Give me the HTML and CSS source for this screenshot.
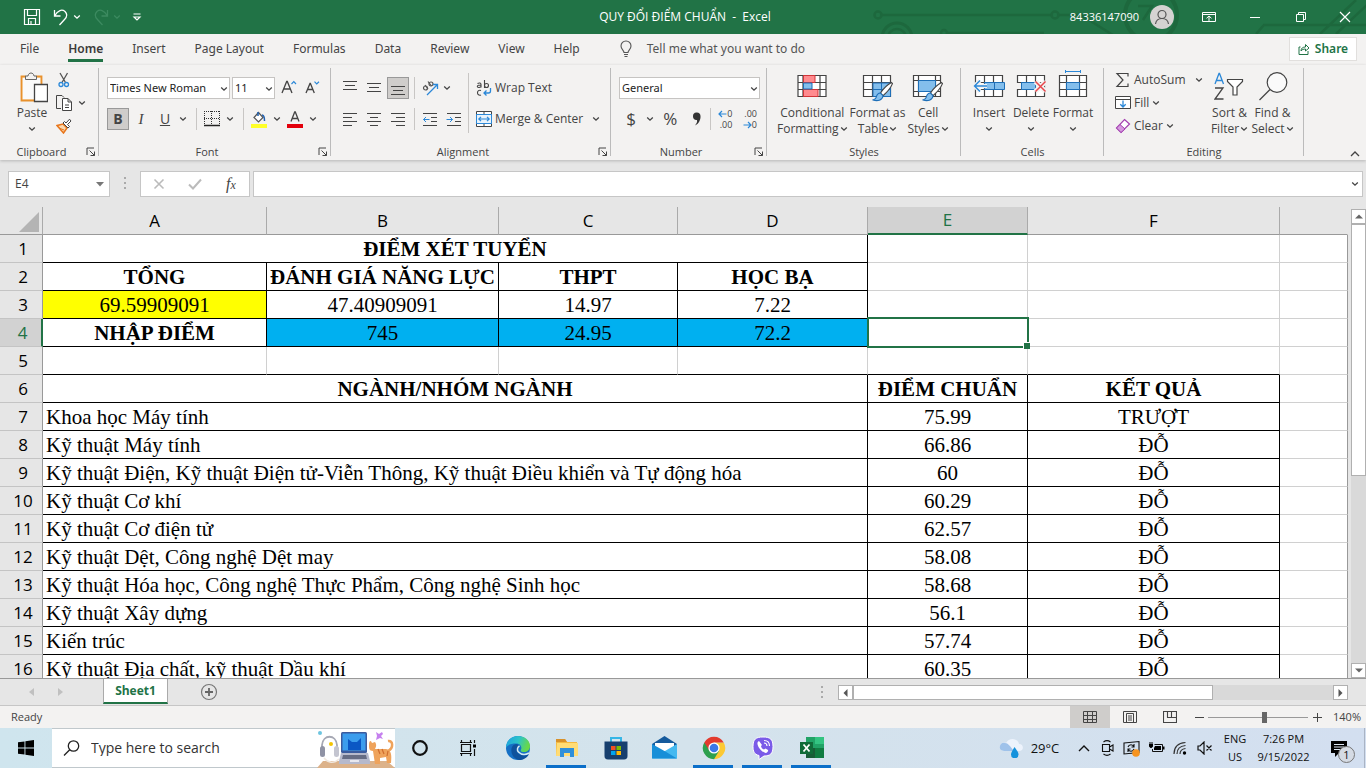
FILE: index.html
```html
<!DOCTYPE html>
<html lang="vi">
<head>
<meta charset="utf-8">
<meta name="viewport" content="width=device-width, initial-scale=1">
<title>QUY ĐỔI ĐIỂM CHUẨN - Excel</title>
<link rel="stylesheet" href="styles.css">
</head>
<body>
<svg class="defs" aria-hidden="true">
  <symbol id="chev" viewBox="0 0 8 8"><path d="M1.2 2.5 4 5.2l2.8-2.7" fill="none" stroke="currentColor" stroke-width="1.3"/></symbol>
  <symbol id="launch" viewBox="0 0 10 10"><path d="M1 8V1h7M3.500 3.500l5 5M8.500 4.500v4h-4" fill="none" stroke="#444" stroke-width="1"/></symbol>
  <symbol id="brush" viewBox="0 0 20 20"><path d="M18.500 1.500C14 4 10 8.500 8 11.500l2.500 2.500C14 11 18 6 19.500 2.500z" fill="#fff" stroke="#444" stroke-width="1.100"/><path d="M8 11.500c-3 0-3.500 2-4 4-.4 1.500-1.500 2-3 2.500 4 1.500 9 .5 9.500-4z" fill="#83beec" stroke="#1e6fb8" stroke-width="1"/></symbol>
</svg>

<header class="titlebar">
  <svg class="circuit" viewBox="0 0 526 34" width="526" height="34" aria-hidden="true">
    <g fill="none" stroke="#1d683d" stroke-width="2.500">
      <circle cx="38" cy="15" r="3.500"/><path d="M42 15h169M219 15h22l35 22"/><circle cx="215" cy="15" r="3.500"/>
      <circle cx="57" cy="38" r="15" stroke-width="3"/><circle cx="57" cy="38" r="9"/><circle cx="104" cy="33" r="3"/><path d="M108 33h96"/>
      <circle cx="311" cy="15" r="26" stroke-width="4"/><path d="M298 6h14l-9 14M416 34l8-9h102M480 34l36-34M496 34l32-30"/>
    </g>
  </svg>
  <div class="quick">
    <button aria-label="Save"><svg width="18" height="18" viewBox="0 0 18 18"><path d="M1.500 1.500h15v15h-15zM4.500 1.500v6h9v-6M5.500 16v-5.500h7V16M8 16v-3" fill="none" stroke="#fff" stroke-width="1.200"/></svg></button>
    <button aria-label="Undo"><svg width="18" height="18" viewBox="0 0 18 18"><path d="M2.500 2v6h6M2.500 8C6 2 10 1 13 3.500c3 3 1.500 6-.5 8L7.500 17" fill="none" stroke="#fff" stroke-width="1.300"/></svg><svg class="c8"><use href="#chev"/></svg></button>
    <button class="dim" aria-label="Redo"><svg width="18" height="18" viewBox="0 0 18 18"><path d="M15.500 2v6h-6M15.500 8C12 2 8 1 5 3.500c-3 3-1.500 6 .5 8l5 5.500" fill="none" stroke="currentColor" stroke-width="1.300"/></svg><svg class="c8"><use href="#chev"/></svg></button>
    <button aria-label="Customize toolbar"><svg width="10" height="10" viewBox="0 0 10 10"><path d="M1.500 2h7M2 5l3 3 3-3z" fill="none" stroke="#fff" stroke-width="1.200"/></svg></button>
  </div>
  <h1 class="doc-title">QUY ĐỔI ĐIỂM CHUẨN&nbsp; -&nbsp; Excel</h1>
  <div class="account">
    <span>84336147090</span>
    <svg width="24" height="24" viewBox="0 0 24 24"><circle cx="12" cy="12" r="12" fill="#d5d3d2"/><circle cx="12" cy="9.500" r="4" fill="none" stroke="#555" stroke-width="1.200"/><path d="M5.500 19c.5-4 3-5.500 6.500-5.500s6 1.500 6.500 5.500" fill="none" stroke="#555" stroke-width="1.200"/></svg>
  </div>
  <div class="window-buttons">
    <button aria-label="Ribbon display options"><svg width="14" height="12" viewBox="0 0 14 12"><path d="M.5 1.500h13v9H.5zM.5 3.500h13M7 10V5M4.500 7.300 7 5l2.500 2.300" fill="none" stroke="#fff"/></svg></button>
    <button aria-label="Minimize"><svg width="12" height="12" viewBox="0 0 12 12"><path d="M1 6.500h10" stroke="#fff"/></svg></button>
    <button aria-label="Restore"><svg width="12" height="12" viewBox="0 0 12 12"><path d="M1.500 3.500h7v7h-7zM3.500 3.500v-2h7v7h-2" fill="none" stroke="#fff"/></svg></button>
    <button aria-label="Close"><svg width="12" height="12" viewBox="0 0 12 12"><path d="m1 1 10 10M11 1 1 11" stroke="#fff" stroke-width="1.200"/></svg></button>
  </div>
</header>

<nav class="tabs">
  <a href="#file">File</a><a href="#home" class="active">Home</a><a href="#insert">Insert</a><a href="#layout">Page Layout</a><a href="#formulas">Formulas</a><a href="#data">Data</a><a href="#review">Review</a><a href="#view">View</a><a href="#help">Help</a>
  <button class="tell"><svg width="14" height="18" viewBox="0 0 14 18"><path d="M5 12.500c0-2-3-3-3-6.500a5 5 0 0 1 10 0c0 3.500-3 4.500-3 6.500zM5 14.500h4M5.500 16.500h3" fill="none" stroke="#555" stroke-width="1.100"/></svg>Tell me what you want to do</button>
  <button class="share"><svg width="12" height="12" viewBox="0 0 12 12"><path d="M2.500 4H1v7.500h9V8M3 8c0-3 2-4 4.500-4V1.500L11 5 7.500 8V6C5.500 6 4 6.500 3 8z" fill="none" stroke="#217346"/></svg>Share</button>
</nav>

<section class="ribbon" aria-label="Home ribbon">
  <div class="group g-clipboard">
    <div class="body">
      <button class="big paste"><svg width="28" height="32" viewBox="0 0 28 32"><path d="M6 4.500H1.500v24H14M16 4.500h5.500V12" fill="#fcebd0" stroke="#e8912d" stroke-width="1.800"/><path d="M3 6h17v7h-6v14H3z" fill="#fafafa"/><path d="M5.500 7.500V4H8c.5-4 5.500-4 6 0h2.500v3.500z" fill="#f3f2f1" stroke="#666"/><path d="M14.500 12.500h13v17h-13z" fill="#fff" stroke="#444" stroke-width="1.300"/></svg><span>Paste</span><svg class="c8"><use href="#chev"/></svg></button>
      <div class="stack">
        <button aria-label="Cut"><svg width="16" height="16" viewBox="0 0 16 16"><path d="m4 1 5.500 9.500M11.500 1 6 10.500" stroke="#555" stroke-width="1.300"/><circle cx="5" cy="12.500" r="2" fill="none" stroke="#2b88d8" stroke-width="1.300"/><circle cx="10.500" cy="12.500" r="2" fill="none" stroke="#2b88d8" stroke-width="1.300"/></svg></button>
        <button aria-label="Copy"><svg width="16" height="16" viewBox="0 0 16 16"><path d="M5 13.500H.5V.5H6L8 2.500" fill="none" stroke="#444"/><path d="M6.500 3.500H12l3.500 3.500v8.500h-9zM12 3.500V7h3.500M9 10h4M9 12.500h4" fill="#fff" stroke="#444"/></svg><svg class="c8"><use href="#chev"/></svg></button>
        <button aria-label="Format painter"><svg width="16" height="16" viewBox="0 0 16 16"><path d="M1 7.500 7 6l4 4-3.500 5z" fill="#fbd9b0" stroke="#e8751a" stroke-width="1.500"/><path d="m3 10 5 2" stroke="#e8751a"/><path d="m7 5 5 5 1.500-1.500-2-2L15 3 13.500 1.200 10 5 8.500 3.500z" fill="#fff" stroke="#444"/></svg></button>
      </div>
    </div>
    <div class="label">Clipboard<button aria-label="Clipboard settings"><svg><use href="#launch"/></svg></button></div>
  </div>

  <div class="group g-font">
    <div class="body rows">
      <div class="row">
        <div class="combo font-name"><select aria-label="Font"><option>Times New Roman</option></select><svg class="c8"><use href="#chev"/></svg></div>
        <div class="combo font-size"><select aria-label="Font size"><option>11</option></select><svg class="c8"><use href="#chev"/></svg></div>
        <button class="tool" aria-label="Increase font size"><svg width="16" height="16" viewBox="0 0 16 16"><path d="M1 13 5.700 1.500h.6L11 13M2.700 9h6.600" fill="none" stroke="#444" stroke-width="1.300"/><path d="m10.500 4 2.300-2.300L15 4" fill="none" stroke="#2b88d8" stroke-width="1.200"/></svg></button>
        <button class="tool" aria-label="Decrease font size"><svg width="16" height="16" viewBox="0 0 16 16"><path d="M1 13 5 3.500h.4L9.300 13M2.500 9.500H8" fill="none" stroke="#444" stroke-width="1.300"/><path d="m9.500 1.700 2.200 2.200L14 1.700" fill="none" stroke="#2b88d8" stroke-width="1.200"/></svg></button>
      </div>
      <div class="row">
        <button class="tool on" aria-label="Bold"><b>B</b></button>
        <button class="tool" aria-label="Italic"><i>I</i></button>
        <button class="tool" aria-label="Underline"><u>U</u></button>
        <button class="drop" aria-label="Underline options"><svg class="c8"><use href="#chev"/></svg></button>
        <span class="sep"></span>
        <button class="tool" aria-label="Borders"><svg width="16" height="16" viewBox="0 0 16 16"><path d="M.5 0v14M15.500 0v14M7.500 0v14M0 .5h16M0 7.500h16" stroke="#333" stroke-dasharray="1 1"/><path d="M0 14.500h16" stroke="#222" stroke-width="1.500"/></svg></button>
        <button class="drop" aria-label="Border options"><svg class="c8"><use href="#chev"/></svg></button>
        <span class="sep"></span>
        <button class="tool" aria-label="Fill color"><svg width="16" height="17" viewBox="0 0 16 17"><path d="M3 6.500 7.500 1.500l4.500 5-4.500 4.500z" fill="#fff" stroke="#555" stroke-width="1.200"/><path d="M7 1v4M11 4c2 0 2.500 3 2.500 6" fill="none" stroke="#1e5fb0" stroke-width="1.500"/><path d="M0 13h16v4H0z" fill="#ffff28"/></svg></button>
        <button class="drop" aria-label="Fill options"><svg class="c8"><use href="#chev"/></svg></button>
        <button class="tool" aria-label="Font color"><svg width="16" height="17" viewBox="0 0 16 17"><path d="M4 10.500 7.700 1h.6l3.700 9.500M5.300 7.500h5.400" fill="none" stroke="#444" stroke-width="1.300"/><path d="M0 13h16v4H0z" fill="#e3000b"/></svg></button>
        <button class="drop" aria-label="Font color options"><svg class="c8"><use href="#chev"/></svg></button>
      </div>
    </div>
    <div class="label">Font<button aria-label="Font settings"><svg><use href="#launch"/></svg></button></div>
  </div>

  <div class="group g-align">
    <div class="body">
      <div class="rows">
        <div class="row wide">
          <button class="tool" aria-label="Top align"><svg class="lines"><path d="M1 1.500h14M3 5.500h10M1 9.500h14"/></svg></button>
          <button class="tool" aria-label="Middle align"><svg class="lines"><path d="M1 3.500h14M3 7.500h10M1 11.500h14"/></svg></button>
          <button class="tool on" aria-label="Bottom align"><svg class="lines"><path d="M1 6.500h14M3 10.500h10M1 14.500h14"/></svg></button>
          <span class="sep"></span>
          <button class="tool" aria-label="Orientation"><svg width="17" height="16" viewBox="0 0 17 16"><g fill="none" stroke="#555" stroke-width="1.200"><circle cx="3.500" cy="8" r="2"/><path d="m3 5 3 4M6 1.500 9.500 6"/><circle cx="9" cy="4" r="2"/></g><path d="M5 15 15.500 4.500M11 4.500h4.500V9" fill="none" stroke="#2b88d8" stroke-width="1.300"/></svg></button>
          <button class="drop" aria-label="Orientation options"><svg class="c8"><use href="#chev"/></svg></button>
        </div>
        <div class="row wide">
          <button class="tool" aria-label="Align left"><svg class="lines"><path d="M1 2.500h14M1 6.500h9M1 10.500h14M1 14.500h9"/></svg></button>
          <button class="tool" aria-label="Center"><svg class="lines"><path d="M1 2.500h14M4 6.500h8M1 10.500h14M4 14.500h8"/></svg></button>
          <button class="tool" aria-label="Align right"><svg class="lines"><path d="M1 2.500h14M6 6.500h9M1 10.500h14M6 14.500h9"/></svg></button>
          <span class="sep"></span>
          <button class="tool" aria-label="Decrease indent"><svg class="lines"><path d="M1 2.500h14M9 6.500h6M9 10.500h6M1 14.500h14"/><path class="blue" d="M7.500 8.500h-6M4 6 1.500 8.500 4 11"/></svg></button>
          <button class="tool" aria-label="Increase indent"><svg class="lines"><path d="M1 2.500h14M9 6.500h6M9 10.500h6M1 14.500h14"/><path class="blue" d="M.5 8.500h6M4 6l2.500 2.500L4 11"/></svg></button>
        </div>
      </div>
      <div class="rows wraps">
        <button class="text-tool"><svg width="16" height="16" viewBox="0 0 16 16"><g fill="none" stroke="#444" stroke-width="1.100"><path d="M1.500 3.500c2-1 3.500-.5 3.500 1v3M5 5C3 5 1.300 5.300 1.300 6.500S4 8 5 6.500M8.500 0v8"/><circle cx="10.500" cy="5.500" r="2"/><path d="M5 10.500c-2-.7-3.500.3-3.500 2.200s1.500 3 3.500 2.300"/></g><path d="M14.500 8v3c0 1.500-1 2-2 2H8M10.500 10.500 8 13l2.500 2.500" fill="none" stroke="#2b88d8" stroke-width="1.300"/></svg>Wrap Text</button>
        <button class="text-tool"><svg width="16" height="16" viewBox="0 0 16 16"><path d="M.5.5h15v15H.5zM.5 3.500h15M.5 12.500h15M8 .5v3M8 12.500v3" fill="#fff" stroke="#444"/><path d="M.5 3.500h15v9H.5z" fill="#e8f3fc" stroke="#2b88d8"/><path d="M3 8h10M5 5.800 2.800 8 5 10.200M11 5.800 13.200 8 11 10.200" fill="none" stroke="#2b88d8" stroke-width="1.200"/></svg>Merge &amp; Center<svg class="c8 apart"><use href="#chev"/></svg></button>
      </div>
    </div>
    <div class="label">Alignment<button aria-label="Alignment settings"><svg><use href="#launch"/></svg></button></div>
  </div>

  <div class="group g-number">
    <div class="body rows">
      <div class="combo"><select aria-label="Number format"><option>General</option></select><svg class="c8"><use href="#chev"/></svg></div>
      <div class="row">
        <button class="tool sym" aria-label="Accounting format">$</button>
        <button class="drop" aria-label="Accounting options"><svg class="c8"><use href="#chev"/></svg></button>
        <button class="tool sym pc" aria-label="Percent style">%</button>
        <button class="tool" aria-label="Comma style"><svg width="10" height="14" viewBox="0 0 10 14"><path d="M1 4.500a3.500 3.500 0 0 1 7.500-.5c.3 4-2 8-5.500 9.500 1.500-2 2.500-3.500 2-5.500C3 8.500 1 7 1 4.500z" fill="#333"/></svg></button>
        <span class="sep"></span>
        <button class="tool dec" aria-label="Increase decimal"><span><svg width="9" height="8" viewBox="0 0 9 8"><path d="M8.500 4H1M4 1 1 4l3 3" fill="none" stroke="#2b88d8" stroke-width="1.200"/></svg>0</span><span>.00</span></button>
        <button class="tool dec" aria-label="Decrease decimal"><span>.00</span><span><svg width="9" height="8" viewBox="0 0 9 8"><path d="M.5 4H8M5 1l3 3-3 3" fill="none" stroke="#2b88d8" stroke-width="1.200"/></svg>0</span></button>
      </div>
    </div>
    <div class="label">Number<button aria-label="Number settings"><svg><use href="#launch"/></svg></button></div>
  </div>

  <div class="group g-styles">
    <div class="body">
      <button class="big"><svg width="30" height="32" viewBox="0 0 30 32"><path d="M1 3.500h28v21H1zM1 10.500h28M1 17.500h28M6 3.500v21M23 3.500v21" fill="#fff" stroke="#444" stroke-width="1.200"/><path d="M6.500 3.500H18v7H6.500zM6.500 17.500H21v7H6.500z" fill="#ff8b8f" stroke="#d13438"/><path d="M6.500 11H15v6H6.500z" fill="#83beec" stroke="#1e6fb8"/></svg><span>Conditional</span><span>Formatting <svg class="c8"><use href="#chev"/></svg></span></button>
      <button class="big"><svg width="32" height="32" viewBox="0 0 32 32"><path d="M1.500 3.500h27v21h-27zM1.500 10.500h27M1.500 17.500h27M10.500 3.500v21M19.500 3.500v21" fill="#fff" stroke="#444" stroke-width="1.200"/><path d="M11 11h17.500v13H11z" fill="#83beec"/><path d="M11 17.500h17M19.500 11v13M11 11h17.500v13.500H11z" fill="none" stroke="#1e6fb8"/><use href="#brush" x="10" y="9" width="21" height="21"/></svg><span>Format as</span><span>Table <svg class="c8"><use href="#chev"/></svg></span></button>
      <button class="big"><svg width="32" height="32" viewBox="0 0 32 32"><path d="M1.500 3.500h27v21h-27zM1.500 8.500h27M1.500 19.500h27M6.500 3.500v21M23.500 3.500v21" fill="#fff" stroke="#444" stroke-width="1.200"/><path d="M6.500 8.500h17v11h-17z" fill="#83beec" stroke="#1e6fb8"/><use href="#brush" x="10" y="9" width="21" height="21"/></svg><span>Cell</span><span>Styles <svg class="c8"><use href="#chev"/></svg></span></button>
    </div>
    <div class="label">Styles</div>
  </div>

  <div class="group g-cells">
    <div class="body">
      <button class="big"><svg width="32" height="32" viewBox="0 0 32 32"><path d="M2.500 3.500h27v21h-27zM2.500 10.500h27M2.500 17.500h27M11.500 3.500v21M20.500 3.500v21" fill="#fff" stroke="#444" stroke-width="1.200"/><path d="M11.500 10.500h20v7h-20z" fill="#83beec" stroke="#1e6fb8"/><path d="M21.500 10.500v7" stroke="#1e6fb8"/><path d="M14 14H2M7 8.500 1.500 14 7 19.500" fill="none" stroke="#f3f2f1" stroke-width="4"/><path d="M14 14H1.500M7 8.500 1.500 14 7 19.500" fill="none" stroke="#2b88d8" stroke-width="1.400"/></svg><span>Insert</span><svg class="c8"><use href="#chev"/></svg></button>
      <button class="big"><svg width="32" height="32" viewBox="0 0 32 32"><path d="M2.500 3.500h27v21h-27zM2.500 10.500h27M2.500 17.500h27M11.500 3.500v21M20.500 3.500v21" fill="#fff" stroke="#444" stroke-width="1.200"/><path d="M0 11h6.500v6H0z" fill="#f3f2f1"/><path d="M6.500 10.500h14v7h-14z" fill="#83beec" stroke="#1e6fb8"/><path d="m20.500 9.500 10 10m0-10-10 10" stroke="#f3f2f1" stroke-width="5"/><path d="m20.500 9.500 10 10m0-10-10 10" stroke="#e8474c" stroke-width="1.500"/></svg><span>Delete</span><svg class="c8"><use href="#chev"/></svg></button>
      <button class="big"><svg class="over" width="32" height="32" viewBox="0 0 32 32"><path d="M2.500 3.500h27v21h-27zM2.500 10.500h27M2.500 17.500h27M9.500 3.500v21M22.500 3.500v21" fill="#fff" stroke="#444" stroke-width="1.200"/><path d="M9.500 10.500h13v7h-13z" fill="#83beec" stroke="#1e6fb8"/><path d="M8.500-.5h15M8.500-2v3M23.500-2v3" stroke="#2b88d8"/></svg><span>Format</span><svg class="c8"><use href="#chev"/></svg></button>
    </div>
    <div class="label">Cells</div>
  </div>

  <div class="group g-edit">
    <div class="body">
      <div class="edit-list">
        <button class="text-tool"><svg width="16" height="16" viewBox="0 0 16 16"><path d="M13 4.500v-3H2L8 8l-6 6.500h11v-3" fill="none" stroke="#444" stroke-width="1.200"/></svg>AutoSum<svg class="c8 apart"><use href="#chev"/></svg></button>
        <button class="text-tool"><svg width="16" height="16" viewBox="0 0 16 16"><path d="M.5 1.500h15v12H.5zM.5 4.500h15" fill="#fff" stroke="#444"/><path d="M8 5.500v6.500M5.300 9.300 8 12l2.700-2.700" fill="none" stroke="#2b88d8" stroke-width="1.300"/></svg>Fill <svg class="c8"><use href="#chev"/></svg></button>
        <button class="text-tool"><svg width="16" height="16" viewBox="0 0 16 16"><path d="M9.500 1.500 14.500 6 6 14.500 1.500 10z" fill="#fff" stroke="#a33fb0" stroke-width="1.200"/><path d="m5 6.500 5 4.500-4 3.500L1.500 10z" fill="#d59ade" stroke="#a33fb0"/></svg>Clear <svg class="c8"><use href="#chev"/></svg></button>
      </div>
      <button class="big"><svg width="32" height="32" viewBox="0 0 32 32"><path d="M1 12 5 1.500h.5L9.500 12M2.500 8.500H8" fill="none" stroke="#2b88d8" stroke-width="1.300"/><path d="M1 16h8L1 27h8.500" fill="none" stroke="#444" stroke-width="1.300"/><path d="M13.500 7.500h15v2L23 15v8h-4v-8l-5.500-5.500z" fill="#fff" stroke="#444" stroke-width="1.200"/></svg><span>Sort &amp;</span><span>Filter <svg class="c8"><use href="#chev"/></svg></span></button>
      <button class="big"><svg width="32" height="32" viewBox="0 0 32 32"><circle cx="20" cy="10.500" r="9.800" fill="#fafafa" stroke="#444" stroke-width="1.200"/><path d="M13 17.500 2.500 28" stroke="#444" stroke-width="1.300"/></svg><span>Find &amp;</span><span>Select <svg class="c8"><use href="#chev"/></svg></span></button>
    </div>
    <div class="label">Editing</div>
  </div>
  <button class="collapse" aria-label="Collapse ribbon"><svg width="10" height="6" viewBox="0 0 10 6"><path d="m1 5 4-4 4 4" fill="none" stroke="#444" stroke-width="1.300"/></svg></button>
</section>

<section class="formula" aria-label="Formula bar">
  <div class="name-box"><input aria-label="Name box" value="E4"><svg width="8" height="5" viewBox="0 0 8 5"><path d="M0 0h8L4 4.500z" fill="#777"/></svg></div>
  <span class="dots"></span>
  <div class="fx">
    <button aria-label="Cancel"><svg width="12" height="12" viewBox="0 0 12 12"><path d="m1.500 1.500 9 9m0-9-9 9" stroke="#bbb" stroke-width="1.600"/></svg></button>
    <button aria-label="Enter"><svg width="14" height="12" viewBox="0 0 14 12"><path d="m1 6.500 4 4L13 1.500" fill="none" stroke="#bbb" stroke-width="2"/></svg></button>
    <button aria-label="Insert function"><i>f<small>x</small></i></button>
  </div>
  <div class="entry"><input aria-label="Formula"><svg class="c8"><use href="#chev"/></svg></div>
</section>

<main class="sheet">
  <div class="grid-view">
    <table class="grid">
      <colgroup><col class="w-row"><col class="w-a"><col class="w-b"><col class="w-c"><col class="w-d"><col class="w-e"><col class="w-f"><col></colgroup>
      <thead><tr><th class="corner"><svg width="20" height="20" viewBox="0 0 20 20"><path d="M20 0v20H0z" fill="#b4b4b4"/></svg></th><th>A</th><th>B</th><th>C</th><th>D</th><th class="sel">E</th><th>F</th><th></th></tr></thead>
      <tbody>
        <tr><th>1</th><td colspan="4" class="k h">ĐIỂM XÉT TUYỂN</td><td></td><td></td><td></td></tr>
        <tr><th>2</th><td class="k h">TỔNG</td><td class="k h">ĐÁNH GIÁ NĂNG LỰC</td><td class="k h">THPT</td><td class="k h">HỌC BẠ</td><td></td><td></td><td></td></tr>
        <tr><th>3</th><td class="k yellow">69.59909091</td><td class="k">47.40909091</td><td class="k">14.97</td><td class="k">7.22</td><td></td><td></td><td></td></tr>
        <tr><th class="sel">4</th><td class="k h">NHẬP ĐIỂM</td><td class="k blue">745</td><td class="k blue">24.95</td><td class="k blue">72.2</td><td class="cursor"></td><td></td><td></td></tr>
        <tr class="above"><th>5</th><td></td><td></td><td></td><td></td><td></td><td></td><td></td></tr>
        <tr><th>6</th><td colspan="4" class="k h">NGÀNH/NHÓM NGÀNH</td><td class="k h">ĐIỂM CHUẨN</td><td class="k h">KẾT QUẢ</td><td></td></tr>
        <tr><th>7</th><td colspan="4" class="k l">Khoa học Máy tính</td><td class="k">75.99</td><td class="k">TRƯỢT</td><td></td></tr>
        <tr><th>8</th><td colspan="4" class="k l">Kỹ thuật Máy tính</td><td class="k">66.86</td><td class="k">ĐỖ</td><td></td></tr>
        <tr><th>9</th><td colspan="4" class="k l">Kỹ thuật Điện, Kỹ thuật Điện tử-Viễn Thông, Kỹ thuật Điều khiển và Tự động hóa</td><td class="k">60</td><td class="k">ĐỖ</td><td></td></tr>
        <tr><th>10</th><td colspan="4" class="k l">Kỹ thuật Cơ khí</td><td class="k">60.29</td><td class="k">ĐỖ</td><td></td></tr>
        <tr><th>11</th><td colspan="4" class="k l">Kỹ thuật Cơ điện tử</td><td class="k">62.57</td><td class="k">ĐỖ</td><td></td></tr>
        <tr><th>12</th><td colspan="4" class="k l">Kỹ thuật Dệt, Công nghệ Dệt may</td><td class="k">58.08</td><td class="k">ĐỖ</td><td></td></tr>
        <tr><th>13</th><td colspan="4" class="k l">Kỹ thuật Hóa học, Công nghệ Thực Phẩm, Công nghệ Sinh học</td><td class="k">58.68</td><td class="k">ĐỖ</td><td></td></tr>
        <tr><th>14</th><td colspan="4" class="k l">Kỹ thuật Xây dựng</td><td class="k">56.1</td><td class="k">ĐỖ</td><td></td></tr>
        <tr><th>15</th><td colspan="4" class="k l">Kiến trúc</td><td class="k">57.74</td><td class="k">ĐỖ</td><td></td></tr>
        <tr><th>16</th><td colspan="4" class="k l">Kỹ thuật Địa chất, kỹ thuật Dầu khí</td><td class="k">60.35</td><td class="k">ĐỖ</td><td></td></tr>
      </tbody>
    </table>
  </div>
  <div class="vscroll">
    <button aria-label="Scroll up"><svg width="8" height="5" viewBox="0 0 8 5"><path d="M0 4.500h8L4 .5z" fill="#666"/></svg></button>
    <div class="track"><div class="thumb"></div></div>
    <button aria-label="Scroll down"><svg width="8" height="5" viewBox="0 0 8 5"><path d="M0 .5h8L4 4.500z" fill="#666"/></svg></button>
  </div>
</main>

<div class="sheetbar">
  <div class="sheet-nav">
    <button aria-label="Previous sheet"><svg width="5" height="8" viewBox="0 0 5 8"><path d="M5 0v8L0 4z" fill="#c0c0c0"/></svg></button>
    <button aria-label="Next sheet"><svg width="5" height="8" viewBox="0 0 5 8"><path d="M0 0v8l5-4z" fill="#c0c0c0"/></svg></button>
  </div>
  <button class="sheet-tab">Sheet1</button>
  <button class="add" aria-label="New sheet"><svg width="18" height="18" viewBox="0 0 18 18"><circle cx="9" cy="9" r="7.500" fill="none" stroke="#777" stroke-width="1.200"/><path d="M9 5v8M5 9h8" stroke="#666" stroke-width="1.800"/></svg></button>
  <span class="dots"></span>
  <div class="hscroll">
    <button aria-label="Scroll left"><svg width="5" height="8" viewBox="0 0 5 8"><path d="M4.500 0v8L.5 4z" fill="#555"/></svg></button>
    <div class="track"><div class="thumb"></div></div>
    <button aria-label="Scroll right"><svg width="5" height="8" viewBox="0 0 5 8"><path d="M.5 0v8l4-4z" fill="#555"/></svg></button>
  </div>
</div>

<footer class="status">
  <span class="ready">Ready</span>
  <div class="views">
    <button class="on" aria-label="Normal view"><svg width="14" height="14" viewBox="0 0 14 14"><path d="M.5 1.500h13v11H.5zM.5 5.500h13M.5 9.500h13M4.500 1.500v11M9.500 1.500v11" fill="none" stroke="#444"/></svg></button>
    <button aria-label="Page layout view"><svg width="14" height="14" viewBox="0 0 14 14"><path d="M.5 1.500h13v11H.5zM3.500 3.500h7v9h-7zM5 6h4M5 8h4M5 10h4" fill="none" stroke="#444"/></svg></button>
    <button aria-label="Page break view"><svg width="14" height="14" viewBox="0 0 14 14"><path d="M.5 1.500h13v11H.5zM4.500 1.500v6h4v-6M8.500 7.500h5" fill="none" stroke="#444" stroke-width="1.100"/></svg></button>
  </div>
  <button class="zb" aria-label="Zoom out"><svg width="9" height="9" viewBox="0 0 9 9"><path d="M0 4.500h9" stroke="#444"/></svg></button>
  <input class="zoom" type="range" min="10" max="265" value="155" aria-label="Zoom">
  <button class="zb" aria-label="Zoom in"><svg width="9" height="9" viewBox="0 0 9 9"><path d="M0 4.500h9M4.500 0v9" stroke="#444"/></svg></button>
  <button class="pct">140%</button>
</footer>

<footer class="taskbar">
  <button class="start" aria-label="Start"><svg width="16" height="16" viewBox="0 0 16 16"><path d="M0 2.300 6.500 1.400v6.100H0zM7.400 1.300 16 0v7.500H7.400zM0 8.400h6.500v6.200L0 13.700zM7.400 8.400H16V16l-8.600-1.300z"/></svg></button>
  <label class="search">
    <svg width="17" height="17" viewBox="0 0 17 17"><circle cx="10.500" cy="6" r="5.200" fill="none" stroke="#222" stroke-width="1.300"/><path d="M6.700 9.800 1 15.500" stroke="#222" stroke-width="1.300"/></svg>
    <input type="text" placeholder="Type here to search" aria-label="Search">
    <svg class="art" width="78" height="39" viewBox="0 0 78 39"><path d="M0 39 6 32h64l8 7z" fill="#dcb28a"/><path d="M5 22V16c1-11 14-11 15 0v6" fill="none" stroke="#a6a8b4" stroke-width="1.800"/><rect x="3" y="17" width="5" height="11" rx="2.500" fill="#8f92a4"/><rect x="17" y="17" width="5" height="11" rx="2.500" fill="#c4c5d0"/><path d="M7 29c4 5 10 6 15 1" fill="none" stroke="#f1e8df" stroke-width="1.500"/><circle cx="14" cy="15" r="2" fill="#f4c400"/><circle cx="3" cy="4" r="2" fill="#6dc5df"/><rect x="24" y="3" width="26" height="21" rx="1.500" fill="#3a5b9e"/><path d="M25.500 4.500h23v17h-23z" fill="#3b9ded"/><path d="M31 21V10l4 3h5l4-4v12z" fill="#0b57c4"/><path d="m24 24h27l2 8v3H22v-3z" fill="#b6b9cc"/><path d="M26 26h23l1 4H25z" fill="#666c84"/><path d="M33 31h9v2h-9z" fill="#e8e8ef"/><path d="M52 16c0-5 2-5 3-2l3-1c2 3 1 5 0 7h11c5 1 6 5 5 14h-4l-1-6-6 1v6h-5l-2-13c-4 0-4-3-4-6z" fill="#efa35b"/><path d="M71 22c6-3 5-11 0-10" fill="none" stroke="#efa35b" stroke-width="2.500"/><path d="m61 20 2 5m2-5 2 5m4-3-1 5" stroke="#cf6d2d" stroke-width="1.200"/><path d="m59 3 3 2 3-2 1 2-2 2 2 3-3-1-4 2 1-4z" fill="#c580ee"/></svg>
  </label>
  <div class="apps">
    <button aria-label="Cortana"><svg width="18" height="18" viewBox="0 0 18 18"><circle cx="9" cy="9" r="6.800" fill="none" stroke="#111" stroke-width="2.200"/></svg></button>
    <button aria-label="Task view"><svg width="17" height="16" viewBox="0 0 17 16"><path d="M1.500 4.500h9v7h-9zM1.500 0v2M10.500 0v2M0 2.500h12M1.500 14v2M10.500 14v2M0 13.500h12M14.500 0v3M14.500 9v7" fill="none" stroke="#111" stroke-width="1.200"/><path d="M13 4.500h3v3h-3z"/></svg></button>
    <button aria-label="Edge"><svg width="24" height="24" viewBox="0 0 24 24"><defs><linearGradient id="eg" x1="0" y1="0" x2="1" y2=".3"><stop offset="0" stop-color="#1b9de2"/><stop offset=".55" stop-color="#2cc4c8"/><stop offset="1" stop-color="#67d84b"/></linearGradient></defs><circle cx="12" cy="12" r="12" fill="#1570c5"/><path d="M0 12C0 4 6 0 12 0s12 4 12 10c0 4-3 6-6 6-2.500 0-4-1-3-2.500 1-2 0-6-5-6C5 7.500 1 9 0 12z" fill="url(#eg)"/><path d="M10 8c-4 1-5 4-4.500 8C6 20 9 23 13 24c4 0 8-2 10-6-4 2-11 2-12-3-.5-3 1-4 2-4 0-2-1-3-3-3z" fill="#0f529c"/><path d="M13.500 10c-2 1-3 4-1 6 3 3 7 3 10.500 1" fill="none" stroke="#d7ebf2" stroke-width="1.500"/></svg></button>
    <button class="run" aria-label="File Explorer"><svg width="22" height="20" viewBox="0 0 22 20"><path d="M0 1h9l2 3h10v14H0z" fill="#f4b93f"/><path d="M0 1h9l2 3H0z" fill="#d8912a"/><path d="M1 5h21v13H0z" fill="#ffdc75"/><path d="M4 19V10h14v9h-4v-4H8v4z" fill="#2f8fd9"/></svg></button>
    <button aria-label="Microsoft Store"><svg width="24" height="24" viewBox="0 0 24 24"><path d="M7 7V2h10v5" fill="none" stroke="#36b6e6" stroke-width="2"/><path d="M.5 5.500h23V20c0 2-1 3.500-3.500 3.500H4C1.500 23.500.5 22 .5 20z" fill="#173f6e"/><path d="M7 10h4.500v4H7z" fill="#f25022"/><path d="M12.500 10H17v4h-4.500z" fill="#7fba00"/><path d="M7 15h4.500v4H7z" fill="#00a4ef"/><path d="M12.500 15H17v4h-4.500z" fill="#ffb900"/></svg></button>
    <button aria-label="Mail"><svg width="25" height="24" viewBox="0 0 25 24"><path d="M0 8 12.500 0 25 8v6H0z" fill="#155a9c"/><path d="M3 7h19v8H3z" fill="#fff"/><path d="M25 8v14.500H0z" fill="#45b9f0"/><path d="m0 8 12.500 7L25 22.500H0z" fill="#188fd8"/></svg></button>
    <button class="run" aria-label="Chrome"><svg width="24" height="24" viewBox="0 0 24 24"><path d="M12 12V6.400h9.700A11.200 11.200 0 0 1 12 23.200z" fill="#fcc934"/><path d="M12 12 2.300 6.400A11.200 11.200 0 0 0 12 23.200L17 15z" fill="#2da04e"/><path d="M2.300 6.400 7 14l5-7.600h9.700A11.200 11.200 0 0 0 2.300 6.400z" fill="#e33b2e"/><circle cx="12" cy="12" r="5.600" fill="#fff"/><circle cx="12" cy="12" r="4.300" fill="#3b78e7"/></svg></button>
    <button class="run" aria-label="Viber"><svg width="22" height="24" viewBox="0 0 22 24"><path d="M11 1c7 0 10 2 10 9.500S18 20 12 20l-5 3.500V19.500C2 18.500 1 15 1 10.500 1 3 4 1 11 1z" fill="#7a5be8" stroke="#fff"/><path d="M7 5c-2 1-2 3-.5 6 2 3 4 5 7 6 2 0 3-2 2.500-3l-2.500-1.500-1.500 1c-1.500-.5-3-2-3-3.500l1-1z" fill="#fff"/><path d="M12 4.500c4 0 5.500 2 5.500 5.500M12 7c2 0 3 1 3 3" fill="none" stroke="#fff" stroke-width="1.100"/></svg></button>
    <button class="run" aria-label="Excel"><svg width="24" height="22" viewBox="0 0 24 22"><path d="M6 0h18v21H6z" fill="#21a366"/><path d="M15 0h9v7h-9z" fill="#33c481"/><path d="M6 11h9v10H6z" fill="#185c37"/><path d="M15 11h9v10h-9z" fill="#107c41"/><path d="M0 5h13v12H0z" fill="#0f6b38"/><path d="m3.500 7.500 6 7m0-7-6 7" stroke="#fff" stroke-width="1.800"/></svg></button>
  </div>
  <div class="tray">
    <button class="weather"><svg width="24" height="20" viewBox="0 0 24 20"><path d="M3 12c-4-4 0-9 4-7 3-6 12-5 13 1 5 0 5 6 1 7H6z" fill="#edf3fc"/><path d="M2 12c-3-3 0-8 4-7 3 0 5 3 9 8H5z" fill="#9fc2ea"/><path d="M15.500 9c3 4 4 6 4 7.500a3.700 3.700 0 0 1-7.500 0c0-1.500 1-3.500 3.500-7.500z" fill="#1592dc"/></svg>29°C</button>
    <button aria-label="Hidden icons"><svg width="12" height="8" viewBox="0 0 12 8"><path d="m1 7 5-5 5 5" fill="none" stroke="#111" stroke-width="1.400"/></svg></button>
    <button aria-label="Meet now"><svg width="14" height="16" viewBox="0 0 14 16"><path d="M1.500 4.500h7v7h-7zM8.500 7 12 5v6L8.500 9M2.500 2c2-1.500 5-1.500 7 0M2.500 14c2 1.500 5 1.500 7 0" fill="none" stroke="#111" stroke-width="1.100"/></svg></button>
    <button aria-label="Update"><svg width="18" height="17" viewBox="0 0 18 17"><path d="m1 3 15-1.500v11L1 14zM5 7c1-3 5-3 6 0M11 4v3H8.500M11 9c-1 3-5 3-6 0M5 12V9h2.500" fill="none" stroke="#111" stroke-width="1.100"/><circle cx="13" cy="13" r="3.800" fill="#f7931e"/></svg></button>
    <button aria-label="Battery"><svg width="17" height="14" viewBox="0 0 17 14"><path d="M6.500 3.500h8v7h-10V8" fill="none" stroke="#111"/><path d="M7 5h6v4H6V7z"/><path d="M15 5.500h1.500v3H15zM1 3h4v2.500L3.500 7h-1L1 5.500zM1.500 1h1v2h-1zM3.500 1h1v2h-1z"/></svg></button>
    <button aria-label="Network"><svg width="14" height="14" viewBox="0 0 14 14"><g fill="none" stroke="#333" stroke-width="1.200"><path d="M1 13C1 6 5 2 12.500 1.500M4 13c0-5 3-8 8.500-8.500M7 13c0-3 2-5 5.500-5.500"/></g><circle cx="11.500" cy="12" r="1.700"/></svg></button>
    <button aria-label="Volume muted"><svg width="15" height="14" viewBox="0 0 15 14"><path d="M1 5h2l4-4v12L3 9H1zM9.500 4.500l5 5m0-5-5 5" fill="none" stroke="#111" stroke-width="1.200"/></svg></button>
    <button class="lang"><span>ENG</span><span>US</span></button>
    <button class="clock"><span>7:26 PM</span><span>9/15/2022</span></button>
    <button class="note" aria-label="Notifications"><svg width="18" height="17" viewBox="0 0 18 17"><path d="M1 1h16v12H9l-4 4v-4H1z"/><path d="M4 4.500h10M4 7h10M4 9.500h7" stroke="#dce6f2"/></svg><span>1</span></button>
  </div>
</footer>
</body>
</html>
```
FILE: styles.css
```css
* { box-sizing: border-box; }
body {
  margin: 0;
  height: 100vh;
  display: flex;
  flex-direction: column;
  overflow: hidden;
  background: #e6e6e6;
  color: #444;
  font: 12px/16px "Open Sans", "Noto Sans", sans-serif;
}
button, input, select { font: inherit; color: inherit; }
button {
  display: flex;
  align-items: center;
  justify-content: center;
  padding: 0;
  border: 0;
  background: none;
  white-space: nowrap;
}
svg { flex: none; display: block; }
.defs { position: absolute; width: 0; height: 0; }
.c8 { width: 8px; height: 8px; }

/* Title bar */
.titlebar {
  flex: none;
  height: 34px;
  display: grid;
  grid-template-columns: 1fr auto 1fr auto;
  align-items: center;
  position: relative;
  background: #217346;
  color: #fff;
}
.circuit { position: absolute; right: 0; top: 0; }
.quick { display: flex; gap: 11px; padding-left: 23px; }
.quick button { gap: 3px; }
.quick .dim { color: #3c8a60; }
.doc-title { margin: 0; font-size: 12px; font-weight: 400; padding-left: 184px; }
.account { position: relative; display: flex; justify-content: flex-end; align-items: center; gap: 11px; padding-right: 12px; font-size: 11px; }
.window-buttons { position: relative; display: flex; }
.window-buttons button { width: 46px; height: 34px; }
.window-buttons button:last-child { width: 42px; }

/* Ribbon tabs */
.tabs { flex: none; height: 31px; display: flex; align-items: flex-start; gap: 29px; padding: 3px 9px 0 20px; background: #f3f2f1; font-family: "Noto Sans", "Open Sans", sans-serif; }
.tabs a { color: #444; text-decoration: none; line-height: 20px; padding-top: 2px; border-bottom: 3px solid transparent; white-space: nowrap; }
.tabs .active { font-weight: 600; color: #3b3a39; border-color: #217346; }
.tell { gap: 14px; height: 24px; margin-left: 10px; color: #555; }
.share { margin-left: auto; gap: 5px; width: 68px; height: 24px; border: 1px solid #e1dfdd; background: #fff; color: #217346; font-weight: 600; }

/* Ribbon */
.ribbon { flex: none; height: 95px; display: flex; background: #f3f2f1; box-shadow: 0 1px 3px #b5b5b5; position: relative; }
.group { flex: none; display: flex; flex-direction: column; position: relative; }
.group::after { content: ""; position: absolute; right: 0; top: 3px; bottom: 4px; width: 1px; background: #bbb; }
.g-clipboard { width: 99px; }
.g-font { width: 232px; }
.g-align { width: 280px; }
.g-number { width: 156px; }
.g-styles { width: 194px; }
.g-cells { width: 143px; }
.g-edit { width: 200px; }
.body { flex: 1; display: flex; }
.label { height: 16px; font-size: 11px; text-align: center; position: relative; padding-right: 16px; }
.g-styles .label, .g-cells .label, .g-edit .label { padding: 0; }
.label button { position: absolute; right: 3px; top: 3px; }
.label svg { width: 10px; height: 10px; }
.rows { display: flex; flex-direction: column; gap: 9px; padding-top: 12px; }
.row { display: flex; align-items: center; height: 22px; }
.row.wide { gap: 2px; }
.tool { width: 24px; height: 22px; font-size: 14px; }
.tool.on { width: 22px; background: #cfcdcb; border: 1px solid #999; }
.tool i { font-family: "Liberation Serif", serif; font-size: 15px; }
.tool.sym { font-size: 17px; }
.tool.pc { width: 28px; }
.drop { width: 12px; height: 22px; }
.sep { width: 1px; height: 22px; background: #c8c6c4; }
.combo { position: relative; height: 22px; }
.combo select { width: 100%; height: 22px; padding: 0 2px; border: 1px solid #c6c4c2; border-radius: 0; background: #fff; color: #222; appearance: none; font-family: "Noto Sans", "Open Sans", sans-serif; font-size: 11px; }
.combo svg { position: absolute; right: 2px; top: 8px; }
.big { flex-direction: column; justify-content: flex-start; padding-top: 7px; font-size: 12px; }
.big > svg:first-child { margin-bottom: 1px; }
.big > span { display: flex; align-items: center; gap: 1px; }
.big > .c8 { margin-top: 4px; }
.over { overflow: visible; }
.g-clipboard .body { padding-left: 16px; gap: 8px; }
.paste { width: 32px; }
.paste > svg:first-child { margin-left: 4px; }
.stack { display: flex; flex-direction: column; gap: 7px; padding-top: 7px; align-items: flex-start; }
.stack button { gap: 6px; }
.g-font .body { padding-left: 8px; }
.font-name { width: 123px; margin-right: 2px; }
.font-size { width: 43px; margin-right: 2px; }
.g-font .sep { margin: 0 3px 0 7px; }
.g-align .body { padding-left: 8px; }
.g-align .wide .tool { width: 22px; }
.g-align .sep { margin: 0 2px 0 3px; }
.g-align .drop { width: 8px; }
.lines { width: 16px; height: 17px; fill: none; stroke: #444; }
.lines .blue { stroke: #2b88d8; }
.text-tool { height: 22px; gap: 3px; font-size: 12px; justify-content: flex-start; }
.apart { margin-left: 6px; }
.wraps { border-left: 1px solid #c8c6c4; margin: 8px 0 11px 3px; padding: 4px 0 0 7px; }
.g-number .body { padding-left: 8px; padding-right: 7px; }
.g-number .row { justify-content: space-between; }
.dec { flex-direction: column; font-size: 9px; line-height: 11px; align-items: flex-end; padding-right: 3px; }
.dec span { display: flex; align-items: center; height: 11px; }
.g-styles .body { padding-left: 10px; gap: 2px; }
.g-cells .body { padding-left: 10px; gap: 6px; }
.g-cells .big { width: 36px; }
.g-edit .body { padding-left: 11px; }
.edit-list { width: 93px; padding-top: 3px; }
.edit-list .text-tool { height: 23px; }
.g-edit .big { width: 43px; }
.collapse { position: absolute; right: 6px; bottom: 3px; }

/* Formula bar */
.formula { flex: none; height: 47px; display: flex; padding: 11px 3px 10px 8px; }
.name-box, .fx, .entry { height: 26px; background: #fff; border: 1px solid #c6c6c6; display: flex; align-items: center; }
.name-box { width: 102px; padding-right: 5px; }
.name-box input, .entry input { flex: 1; min-width: 0; border: 0; outline: 0; background: none; padding: 0 6px; }
.dots { width: 2px; height: 14px; background: repeating-linear-gradient(#aaa 0 2px, transparent 2px 5px); margin: 6px 14px 0; }
.fx { width: 110px; margin-right: 3px; }
.fx button { width: 36px; }
.fx i { font-family: "Liberation Serif", serif; font-size: 16px; }
.fx small { font-size: 12px; }
.entry { flex: 1; padding-right: 3px; }

/* Worksheet */
.sheet { flex: 1; min-height: 0; display: flex; border-bottom: 1px solid #999; }
.grid-view { flex: 1; min-width: 0; overflow: hidden; }
.grid { width: 100%; table-layout: fixed; border-collapse: separate; border-spacing: 0; color: #000; font: 21px/26px "Liberation Serif", serif; }
.w-row { width: 43px; }
.w-a { width: 224px; }
.w-b { width: 232px; }
.w-c { width: 179px; }
.w-d { width: 190px; }
.w-e { width: 160px; }
.w-f { width: 252px; }
.grid th, .grid td { height: 28px; padding: 0; border: solid #d0d0d0; border-width: 0 1px 1px 0; text-align: center; white-space: nowrap; }
.grid th { font: 17px/26px "Open Sans", "Noto Sans", sans-serif; background: #e6e6e6; }
.grid thead th { border-right-color: #aaa; border-bottom-color: #999; }
.grid tbody th { border-right-color: #999; border-bottom-color: #c4c4c4; padding-left: 4px; }
.grid thead .sel { background: #d2d2d2; color: #217346; border-bottom: 2px solid #217346; }
.grid tbody .sel { background: #d2d2d2; color: #217346; border-right: 2px solid #217346; }
.corner svg { margin: 3px 3px 0 auto; }
.grid tr > :last-child { border-right-color: #999; }
.grid thead tr > :last-child { border-right-color: transparent; }
.grid td { background: #fff; }
.grid .k { border-color: #000; }
.grid .h { font-weight: 700; }
.grid .l { text-align: left; padding-left: 3px; }
.grid .yellow { background: #ff0; }
.grid .blue { background: #00b0f0; }
.above td:not(:last-child) { border-bottom-color: #000; }
.cursor { position: relative; }
.cursor::before { content: ""; position: absolute; inset: -2px -2px -2px -1px; border: 2px solid #217346; z-index: 1; }
.cursor::after { content: ""; position: absolute; right: -3px; bottom: -3px; width: 6px; height: 6px; background: #217346; border: solid #fff; border-width: 1px 0 0 1px; z-index: 2; }
.vscroll { width: 18px; padding: 2px 1px 0 3px; display: flex; flex-direction: column; }
.vscroll button, .hscroll button { flex: none; width: 15px; height: 15px; border: 1px solid #b0b0b0; background: #fff; }
.vscroll .track { flex: 1; background: #d9d9d9; width: 15px; }
.thumb { background: #fff; border: 1px solid #b0b0b0; }
.vscroll .thumb { height: 57.500%; }

.sheetbar { flex: none; height: 27px; display: flex; align-items: flex-start; border-bottom: 1px solid #c6c6c6; }
.sheet-nav { width: 103px; padding-left: 29px; height: 26px; display: flex; align-items: center; gap: 24px; }
.sheet-tab { width: 65px; height: 25px; background: #fff; border: 1px solid #aaa; border-top: 0; border-bottom: 2px solid #217346; color: #217346; font-weight: 700; }
.add { height: 26px; margin-left: 32px; }
.sheetbar .dots { margin: 7px 15px 0 auto; }
.hscroll { flex: 0 0 37.300%; display: flex; margin: 6px 18px 0 0; }
.hscroll .track { flex: 1; background: #d9d9d9; }
.hscroll .thumb { width: 75%; height: 15px; }

/* Status bar */
.status { flex: none; height: 22px; display: flex; align-items: center; padding: 0 5px 0 11px; background: #f3f2f1; font-size: 11px; }
.views { margin-left: auto; display: flex; }
.views button { width: 40px; height: 22px; }
.views .on { background: #cfcdcb; }
.zb { width: 18px; }
.zoom { width: 100px; height: 16px; margin: 0; appearance: none; background: linear-gradient(#999, #999) center / 100% 1px no-repeat; }
.zoom::-webkit-slider-thumb { appearance: none; width: 5px; height: 11px; background: #666; }
.pct { width: 35px; justify-content: flex-end; }

/* Taskbar */
.taskbar { flex: none; height: 40px; display: flex; background: linear-gradient(90deg, #cfe5ee, #d4e3ec 50%, #d3dff0); color: #111; }
.start { width: 52px; }
.search { width: 343px; display: flex; align-items: center; background: #fff; padding-left: 11px; border: solid #c0c8cc; border-width: 1px 0; }
.search input { flex: 1; min-width: 0; border: 0; outline: 0; background: none; padding: 0 11px; font-size: 14px; }
.search input::placeholder { color: #333; opacity: 1; }
.apps { display: flex; }
.apps button { width: 49px; height: 40px; position: relative; }
.run::after { content: ""; position: absolute; left: 4px; right: 5px; bottom: 0; height: 3px; background: #0b6fc9; }
.tray { margin-left: auto; display: flex; }
.tray button { width: 24px; }
.tray .weather { width: 62px; gap: 8px; font-size: 13px; margin-right: 12px; }
.tray .lang, .tray .clock { flex-direction: column; line-height: 18px; font-size: 11px; }
.tray .lang { width: 38px; }
.tray .clock { width: 59px; }
.tray .note { width: 52px; position: relative; border-right: 1px solid #aab4c4; margin-right: 1px; }
.note span { position: absolute; left: 25px; top: 18px; width: 17px; height: 17px; border: 1px solid #777; border-radius: 50%; background: #d5dbe4; font-size: 11px; line-height: 15px; }
```
